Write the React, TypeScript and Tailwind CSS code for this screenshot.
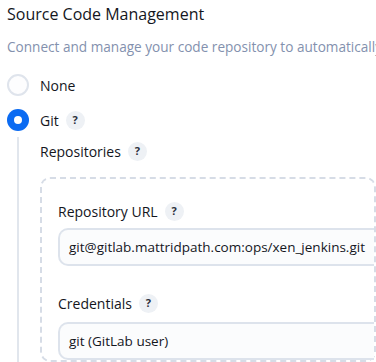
function Help() {
  return (
    <span className="ml-[7px] inline-flex h-[19px] w-[19px] items-center justify-center rounded-full bg-[#eef1f5] text-[11px] font-bold text-[#2a2f3a]">
      ?
    </span>
  );
}

function Radio({ checked }: { checked?: boolean }) {
  if (checked) {
    return (
      <span className="flex h-[22px] w-[22px] shrink-0 items-center justify-center rounded-full bg-[#0b6bf2]">
        <span className="h-[8px] w-[8px] rounded-full bg-white" />
      </span>
    );
  }
  return <span className="h-[22px] w-[22px] shrink-0 rounded-full border-2 border-[#dfe4ec] bg-[#fdfdfe]" />;
}

export default function App() {
  return (
    <div
      className="h-[362px] w-[376px] overflow-hidden bg-white pl-[7px] text-[#14161d]"
      style={{ fontFamily: '"Open Sans", "Noto Sans", sans-serif' }}
    >
      <h2 className="mt-[2px] h-6 whitespace-nowrap text-[16px] font-medium leading-6">Source Code Management</h2>
      <p className="mt-[9px] h-6 whitespace-nowrap text-[13.6px] leading-6 text-[#8391ae]">
        Connect and manage your code repository to automatically trigger builds
      </p>

      <div className="mt-[14px] flex h-6 items-center">
        <Radio />
        <span className="ml-[11px] text-[14px] font-medium">None</span>
      </div>

      <div className="mt-[11px] flex h-6 items-center">
        <Radio checked />
        <span className="ml-[11px] text-[14px] font-medium">Git</span>
        <Help />
      </div>

      <div className="ml-[10px] mt-[5px] border-l-2 border-[#e1e6ed] pl-[21px] pt-[2px]">
        <div className="flex h-6 items-center">
          <span className="text-[14px] font-medium">Repositories</span>
          <Help />
        </div>

        <div className="mt-[14px] rounded-[10px] border-2 border-dashed border-[#d6dce6] pl-4 pt-5">
          <div className="flex h-6 items-center">
            <span className="text-[14px] font-medium">Repository URL</span>
            <Help />
          </div>
          <div className="mt-[5px] flex h-[38px] items-center whitespace-nowrap rounded-l-[10px] border-2 border-r-0 border-[#dde3ec] bg-[#fbfcfd] px-[9px] text-[13.5px]">
            git@gitlab.mattridpath.com:ops/xen_jenkins.git
          </div>

          <div className="mt-[25px] flex h-6 items-center">
            <span className="text-[14px] font-medium">Credentials</span>
            <Help />
          </div>
          <div className="mt-[7px] flex h-[38px] items-center whitespace-nowrap rounded-l-[10px] border-2 border-r-0 border-[#dde3ec] bg-[#fbfcfd] px-[9px] text-[13.5px]">
            git (GitLab user)
          </div>
        </div>
      </div>
    </div>
  );
}
